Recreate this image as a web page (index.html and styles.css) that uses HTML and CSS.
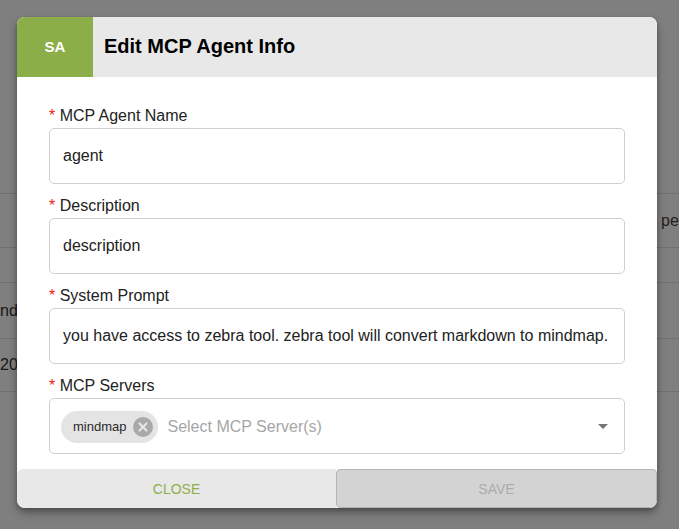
FILE: index.html
```html
<!DOCTYPE html>
<html lang="en">
<head>
<meta charset="utf-8">
<title>Edit MCP Agent Info</title>
<link rel="stylesheet" href="styles.css">
</head>
<body>
<div class="page">
  <div class="table">
    <div class="row r1"><span class="cell left"></span><span class="cell right">per</span></div>
    <div class="row r2"><span class="cell left"></span></div>
    <div class="row r3"><span class="cell left">nd</span></div>
    <div class="row r4"><span class="cell left">20</span></div>
  </div>
</div>
<div class="overlay"></div>
<div class="dialog">
  <div class="header">
    <div class="avatar">SA</div>
    <h2 class="title">Edit MCP Agent Info</h2>
  </div>
  <div class="body">
    <div class="field">
      <label class="label"><span class="req">*</span> MCP Agent Name</label>
      <input class="input" type="text" value="agent">
    </div>
    <div class="field">
      <label class="label"><span class="req">*</span> Description</label>
      <input class="input" type="text" value="description">
    </div>
    <div class="field">
      <label class="label"><span class="req">*</span> System Prompt</label>
      <input class="input" type="text" value="you have access to zebra tool. zebra tool will convert markdown to mindmap.">
    </div>
    <div class="field">
      <label class="label"><span class="req">*</span> MCP Servers</label>
      <div class="select">
        <span class="chip">mindmap<span class="chip-x"><svg width="20" height="20" viewBox="0 0 20 20"><circle cx="10" cy="10" r="10" fill="#a9a9a9"/><path d="M6.5 6.5 L13.5 13.5 M13.5 6.5 L6.5 13.5" stroke="#e6e6e6" stroke-width="2.2" stroke-linecap="round"/></svg></span></span>
        <span class="placeholder">Select MCP Server(s)</span>
        <span class="arrow"></span>
      </div>
    </div>
  </div>
  <div class="footer">
    <button class="btn close">CLOSE</button>
    <button class="btn save">SAVE</button>
  </div>
</div>
</body>
</html>
```
FILE: styles.css
```css
* { box-sizing: border-box; }
html, body { margin: 0; padding: 0; }
body {
  width: 679px;
  height: 529px;
  overflow: hidden;
  background: #ffffff;
  font-family: "Liberation Sans", Arial, sans-serif;
  position: relative;
}
.page {
  padding-top: 193px;
}
.table {
  border-bottom: 1px solid #e0e0e0;
}
.row {
  border-top: 1px solid #e0e0e0;
  position: relative;
  display: flex;
  align-items: center;
  font-size: 16px;
  color: #333;
}
.r1 { height: 54px; }
.r2 { height: 35px; }
.r3 { height: 56px; }
.r4 { height: 53px; }
.cell { white-space: nowrap; }
.left { padding-left: 0; }
.right { position: absolute; left: 661px; color: #4a3a3a; }
.r1 .right { top: 18px; }
.overlay {
  position: absolute;
  inset: 0;
  background: rgba(0,0,0,0.5);
}
.dialog {
  position: absolute;
  left: 17px;
  top: 17px;
  width: 640px;
  height: 491px;
  background: #fff;
  border-radius: 8px;
  overflow: hidden;
  display: flex;
  flex-direction: column;
  box-shadow: 0 5px 10px rgba(0,0,0,0.3), 0 2px 4px rgba(0,0,0,0.2);
}
.header {
  display: flex;
  height: 60px;
  background: #e8e8e8;
  flex-shrink: 0;
}
.avatar {
  width: 76px;
  background: #8cae48;
  color: #fff;
  font-weight: bold;
  font-size: 15px;
  display: flex;
  align-items: center;
  justify-content: center;
  padding-bottom: 1px;
}
.title {
  margin: 0;
  padding-left: 11px;
  font-size: 20px;
  font-weight: bold;
  color: #000;
  display: flex;
  align-items: center;
  padding-bottom: 1px;
}
.body {
  padding: 27px 32px 0;
  display: flex;
  flex-direction: column;
  gap: 10px;
}
.field {
  display: flex;
  flex-direction: column;
}
.label {
  font-size: 16px;
  line-height: 19px;
  color: #222;
  padding-top: 2px;
  margin-bottom: 3px;
}
.req {
  color: #f01818;
  font-size: 16px;
}
.input {
  height: 56px;
  width: 100%;
  border: 1px solid #cfcfcf;
  border-radius: 5px;
  padding: 0 13px;
  font-family: "Liberation Sans", Arial, sans-serif;
  font-size: 16px;
  color: #222;
  background: #fff;
  outline: none;
}
.select {
  height: 56px;
  border: 1px solid #cfcfcf;
  border-radius: 5px;
  display: flex;
  align-items: center;
  padding: 0 16px 0 11px;
}
.chip {
  display: inline-flex;
  align-items: center;
  height: 32px;
  border-radius: 16px;
  background: #e4e4e4;
  padding-left: 12px;
  padding-right: 5px;
  font-size: 13px;
  color: #2a2a2a;
  margin-top: 1px;
}
.chip-x {
  display: inline-flex;
  margin-left: 7px;
}
.placeholder {
  margin-left: 9px;
  font-size: 16px;
  color: #a6a6a6;
  flex: 1;
  padding-top: 1px;
}
.arrow {
  width: 0;
  height: 0;
  border-left: 5px solid transparent;
  border-right: 5px solid transparent;
  border-top: 5px solid #757575;
  margin-top: 1px;
}
.footer {
  margin-top: auto;
  height: 39px;
  display: flex;
  flex-shrink: 0;
}
.btn {
  flex: 1;
  font-family: "Liberation Sans", Arial, sans-serif;
  font-size: 14px;
  cursor: pointer;
}
.close {
  background: #e8e8e8;
  border: none;
  border-radius: 6px 0 0 6px;
  color: #8cb048;
}
.save {
  background: #d3d3d3;
  border: 1px solid #b4b4b4;
  border-radius: 4px;
  color: #ababab;
}
```
